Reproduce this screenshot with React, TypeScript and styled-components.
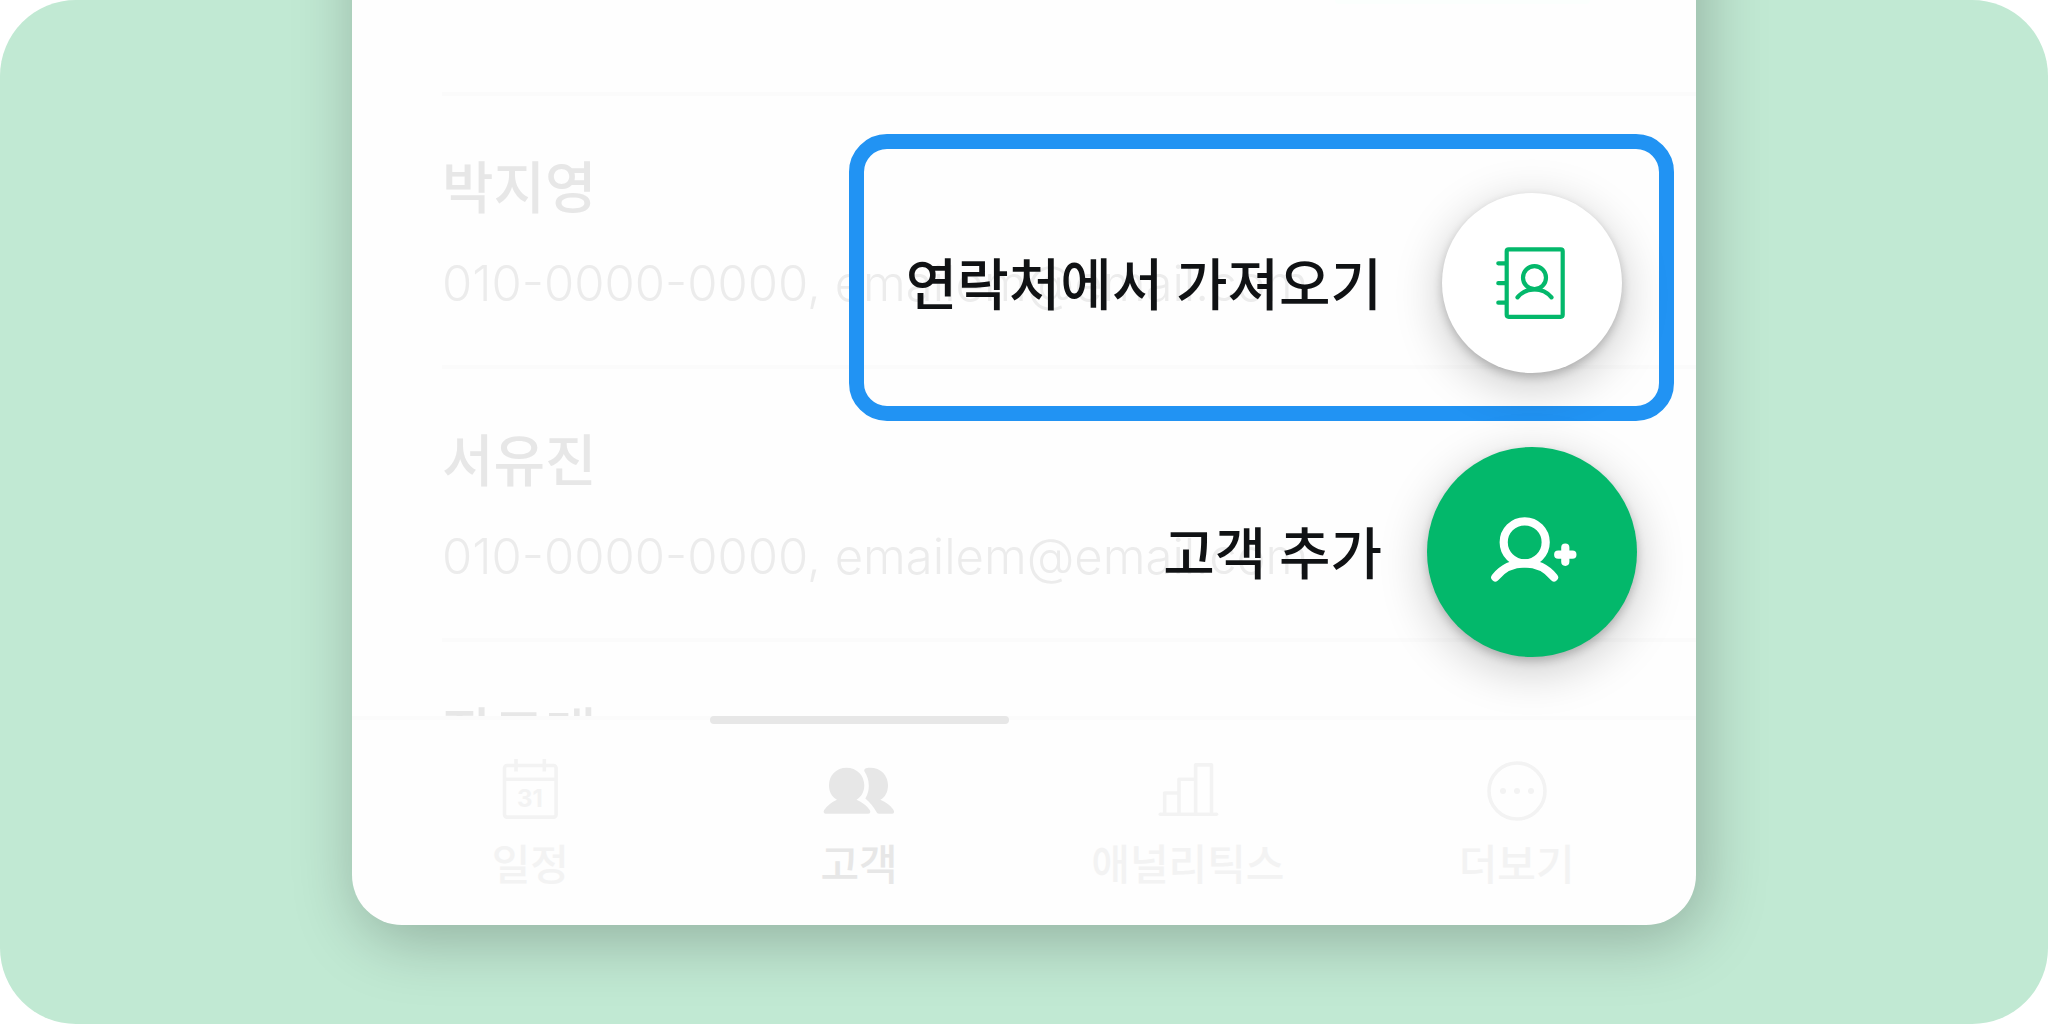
import React from "react";
import styled, { createGlobalStyle } from "styled-components";

const GlobalStyle = createGlobalStyle`
  *, *::before, *::after { box-sizing: border-box; }
  body {
    margin: 0;
    background: #ffffff;
    font-family: Inter, "Noto Sans CJK KR", sans-serif;
  }
`;

const Stage = styled.main`
  display: flex;
  justify-content: center;
  height: 100vh;
  min-height: 800px;
  padding-bottom: 99px;
  overflow: hidden;
  border-radius: 76px;
  background: #c1e9d3;
`;

const Phone = styled.section`
  position: relative;
  display: flex;
  flex-direction: column;
  width: 65.625%;
  margin-top: -120px;
  padding-top: 120px;
  border-radius: 0 0 50px 50px;
  background: #fefefe;
  box-shadow: 6px 14px 64px rgba(0, 0, 0, 0.25);
`;

const CustomerList = styled.ul`
  flex: 1;
  min-height: 0;
  margin: 0;
  padding: 0 0 0 90px;
  overflow: hidden;
  list-style: none;
`;

const TopRow = styled.li`
  display: flex;
  justify-content: flex-end;
  height: 92px;
  padding-right: 106px;
`;

const Chip = styled.span`
  width: 255px;
  height: 4px;
  border-radius: 0 0 8px 8px;
  background: #fbfffd;
`;

const CustomerRow = styled.li`
  height: 273px;
  padding-top: 52px;
  border-top: 4px solid #fbfbfb;
`;

const CustomerName = styled.h2`
  margin: 0 0 28px;
  font: 500 56px/72px "Noto Sans CJK KR", sans-serif;
  color: #e7e7e7;
`;

const CustomerInfo = styled.p`
  margin: 0;
  font-size: 49px;
  font-weight: 300;
  line-height: 72px;
  white-space: nowrap;
  color: #ececec;
`;

const TabBar = styled.nav`
  display: flex;
  height: 209px;
  padding: 0 15px 0 14px;
  border-top: 4px solid #fbfbfb;
`;

const Tab = styled.button<{ $active?: boolean }>`
  position: relative;
  display: flex;
  flex: 1;
  flex-direction: column;
  align-items: center;
  gap: 4px;
  padding: 36px 0 0;
  border: 0;
  background: none;
  font: 500 42px/60px "Noto Sans CJK KR", sans-serif;
  color: ${(p) => (p.$active ? "#e7e7e7" : "#f3f3f3")};
  cursor: pointer;

  &::before {
    content: "";
    display: ${(p) => (p.$active ? "block" : "none")};
    position: absolute;
    top: -4px;
    left: 15px;
    right: 15px;
    height: 8px;
    border-radius: 4px;
    background: currentColor;
  }
`;

const TabIcon = styled.svg`
  flex: none;
  width: 80px;
  height: 72px;
  fill: none;
  stroke: currentColor;
  stroke-width: 3.6;
  stroke-linejoin: round;
`;

const DateMark = styled.text`
  font: 700 24px Inter, sans-serif;
  fill: currentColor;
  stroke: none;
  text-anchor: middle;
`;

const ActionMenu = styled.div`
  position: absolute;
  top: 254px;
  right: 22px;
  display: flex;
  flex-direction: column;
  align-items: flex-end;
  gap: 26px;
`;

const ActionRow = styled.div<{ $highlighted?: boolean }>`
  display: flex;
  align-items: center;
  gap: ${(p) => (p.$highlighted ? 60 : 45)}px;
  padding: ${(p) => (p.$highlighted ? "44px 37px 33px 42px" : "0 37px 0 0")};
  border: ${(p) => (p.$highlighted ? "15px solid #2193f3" : "0")};
  border-radius: 38px;
`;

const ActionLabel = styled.label`
  padding-bottom: 4px;
  font: 500 56px/72px "Noto Sans CJK KR", sans-serif;
  white-space: nowrap;
  color: #101214;
  cursor: pointer;
`;

const RoundButton = styled.button<{ $primary?: boolean }>`
  display: grid;
  place-items: center;
  width: ${(p) => (p.$primary ? 210 : 180)}px;
  height: ${(p) => (p.$primary ? 210 : 180)}px;
  padding: 0;
  border: 0;
  border-radius: 50%;
  background: ${(p) => (p.$primary ? "#03b86b" : "#ffffff")};
  color: ${(p) => (p.$primary ? "#ffffff" : "#03b86b")};
  box-shadow: 0 4px 10px rgba(0, 0, 0, 0.2), 0 12px 48px rgba(0, 0, 0, 0.22);
  cursor: pointer;
`;

const ActionIcon = styled.svg<{ $stroke: number }>`
  width: 96px;
  height: 96px;
  fill: none;
  stroke: currentColor;
  stroke-width: ${(p) => p.$stroke};
  stroke-linecap: round;
  stroke-linejoin: round;
`;

const customers = [
  { name: "박지영", info: "010-0000-0000, emailem@email.com" },
  { name: "서유진", info: "010-0000-0000, emailem@email.com" },
  { name: "장그래", info: "" },
];

const CalendarIcon = () => (
  <TabIcon viewBox="11 16 80 72" aria-hidden="true">
    <rect x="25.5" y="25.5" width="51.6" height="51.6" rx="2.5" />
    <path d="M25.5 39.3H77M37 19V31.5M65.3 19V31.5" />
    <DateMark x="51" y="67.3">31</DateMark>
  </TabIcon>
);

const PeopleIcon = () => (
  <TabIcon viewBox="20 16 80 72" aria-hidden="true">
    <g fill="currentColor" stroke="none">
      <path d="M47.5 27.7C57.5 27.7 65.3 35.3 65.3 45.2C65.3 51.5 62.5 56.5 57.5 59.8C63 62 68 66 70.7 70C72 72 71.3 73.7 69 73.7H27C24.8 73.7 24 72 25.2 70C28 66 32.5 62 38 59.8C32.5 56.5 30 51.5 30 45.2C30 35.3 37.5 27.7 47.5 27.7Z" />
      <path d="M65.5 31.5C64.5 29 66.5 27.7 71 27.7C82 27.7 89 35.5 89 45.2C89 51.5 86.5 57 81.3 59.8C87 62 92 66 94.5 70C95.7 72 95 73.7 93 73.7H80C78.5 73.7 78 73 77.5 72C74.5 66.5 71 62.5 66.3 58.5C69 54 69.8 50 69.8 46C69.8 40 68.3 36 65.5 31.5Z" />
    </g>
  </TabIcon>
);

const ChartIcon = () => (
  <TabIcon viewBox="8 16 80 72" aria-hidden="true">
    <path strokeLinecap="round" d="M20.3 74.3H76.5" />
    <path d="M24.7 74.3V53H39M39 74.3V39.2H55.6M55.6 74.3V24.9H71.5V74.3" />
  </TabIcon>
);

const MoreIcon = () => (
  <TabIcon viewBox="-40 -35 80 72" aria-hidden="true">
    <circle r="28" />
    <g fill="currentColor" stroke="none">
      <circle cx="-14" r="3" />
      <circle r="3" />
      <circle cx="14" r="3" />
    </g>
  </TabIcon>
);

const tabs = [
  { label: "일정", Icon: CalendarIcon },
  { label: "고객", Icon: PeopleIcon, active: true },
  { label: "애널리틱스", Icon: ChartIcon },
  { label: "더보기", Icon: MoreIcon },
];

export default function App() {
  return (
    <>
      <GlobalStyle />
      <Stage>
        <Phone>
          <CustomerList>
            <TopRow>
              <Chip />
            </TopRow>
            {customers.map((c) => (
              <CustomerRow key={c.name}>
                <CustomerName>{c.name}</CustomerName>
                {c.info && <CustomerInfo>{c.info}</CustomerInfo>}
              </CustomerRow>
            ))}
          </CustomerList>

          <TabBar>
            {tabs.map(({ label, Icon, active }) => (
              <Tab key={label} type="button" $active={active}>
                <Icon />
                {label}
              </Tab>
            ))}
          </TabBar>

          <ActionMenu>
            <ActionRow $highlighted>
              <ActionLabel htmlFor="import-contacts">연락처에서 가져오기</ActionLabel>
              <RoundButton id="import-contacts" type="button">
                <ActionIcon viewBox="84 75 96 96" $stroke={4.2} aria-hidden="true">
                  <rect x="106.7" y="89.3" width="56" height="67.5" rx="2" />
                  <path d="M98.3 103.3H106M98.3 123.2H106M98.3 142.7H106" />
                  <circle cx="134.5" cy="117.7" r="11.5" />
                  <path d="M117.5 137.4A22 22 0 0 1 151.5 137.4" />
                </ActionIcon>
              </RoundButton>
            </ActionRow>
            <ActionRow>
              <ActionLabel htmlFor="add-customer">고객 추가</ActionLabel>
              <RoundButton id="add-customer" type="button" $primary>
                <ActionIcon viewBox="84 74 96 96" $stroke={8.2} aria-hidden="true">
                  <circle cx="124.7" cy="112.3" r="21" />
                  <path d="M95.3 147.3A38 38 0 0 1 154 147.3" />
                  <path d="M158.2 124.7H172.4M165.3 117.6V131.8" />
                </ActionIcon>
              </RoundButton>
            </ActionRow>
          </ActionMenu>
        </Phone>
      </Stage>
    </>
  );
}
